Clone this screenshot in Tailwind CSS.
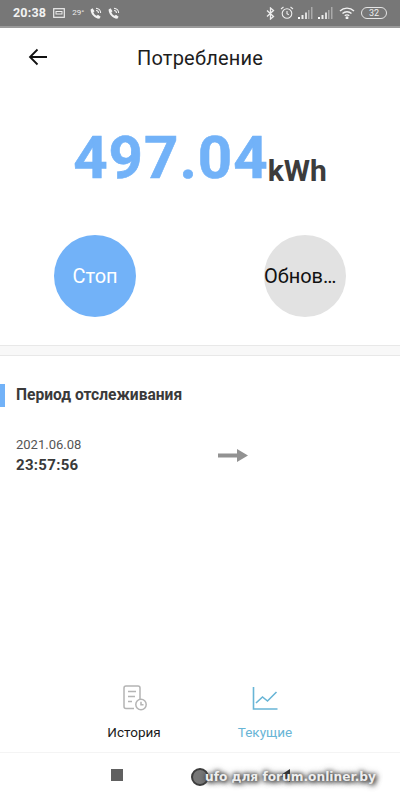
<!DOCTYPE html>
<html><head><meta charset="utf-8"><script src="https://cdn.jsdelivr.net/npm/@tailwindcss/browser@4"></script></head>
<body class="bg-white">
<div class="relative w-[400px] h-[800px] overflow-hidden bg-white font-['Roboto',sans-serif] flex flex-col">
  <div class="h-[28px] shrink-0 bg-[#777777] border-b-2 border-[#9a9a9a] flex items-center justify-between pl-[13px] pr-[13px] text-white">
    <div class="flex items-center">
      <span class="text-[12.5px] font-bold text-[#f2f2f2] tracking-[0.2px]">20:38</span>
      <svg class="ml-[7px]" width="12" height="10" viewBox="0 0 12 10" fill="none" stroke="#eee"><rect x=".7" y=".7" width="10.6" height="8.6" stroke-width="1.2"/><rect x="3" y="3.5" width="6" height="2.5" stroke-width="1"/></svg>
      <span class="ml-[7px] text-[8px] text-[#eee]">29°</span>
      <svg class="ml-[5px]" width="13" height="13" viewBox="0 0 24 24" fill="#f2f2f2"><path d="M6.600 2.500 3 4.500C2.500 12 10 21 19 21.500l2.500-3.500-5-3.500-2.300 1.800C11.500 15.500 8.800 12.500 8 9.800l2.200-2z"/><path d="M13 2.500a8.500 8.500 0 0 1 8.500 8.500" stroke="#f2f2f2" stroke-width="2" fill="none"/><path d="M13 6.500a4.500 4.500 0 0 1 4.500 4.500" stroke="#f2f2f2" stroke-width="2" fill="none"/></svg>
      <svg class="ml-[5px]" width="13" height="13" viewBox="0 0 24 24" fill="#f2f2f2"><path d="M6.600 2.500 3 4.500C2.500 12 10 21 19 21.500l2.500-3.500-5-3.500-2.300 1.800C11.500 15.500 8.800 12.500 8 9.800l2.200-2z"/><path d="M13 2.500a8.500 8.500 0 0 1 8.500 8.500" stroke="#f2f2f2" stroke-width="2" fill="none"/><path d="M13 6.500a4.500 4.500 0 0 1 4.500 4.500" stroke="#f2f2f2" stroke-width="2" fill="none"/></svg>
    </div>
    <div class="flex items-center">
      <svg width="9" height="13" viewBox="0 0 9 13" fill="none" stroke="#eee" stroke-width="1.300"><path d="M1 3.500l6.500 6-3 2.500V1l3 2.500L1 9.500"/></svg>
      <svg class="ml-[5px]" width="14" height="14" viewBox="0 0 14 14" fill="none" stroke="#eee" stroke-width="1.100"><circle cx="7" cy="7.500" r="4.800"/><path d="M7 5v2.800l1.800 1M1 3l2.500-2M13 3l-2.500-2"/></svg>
      <svg class="ml-[4px]" width="15" height="12" viewBox="0 0 15 12"><rect x="0" y="10" width="2" height="2" fill="#fff"/><rect x="3.500" y="8" width="2" height="4" fill="#eee"/><rect x="7" y="5.500" width="2" height="6.500" fill="#ddd"/><rect x="10" y="3" width="1.500" height="9" fill="#aaa"/><rect x="13" y="0" width="1.500" height="12" fill="#aaa"/></svg>
      <svg class="ml-[5px]" width="15" height="12" viewBox="0 0 15 12"><rect x="0" y="10" width="2" height="2" fill="#fff"/><rect x="3.500" y="8" width="2" height="4" fill="#eee"/><rect x="7" y="5.500" width="2" height="6.500" fill="#ddd"/><rect x="10" y="3" width="1.500" height="9" fill="#aaa"/><rect x="13" y="0" width="1.500" height="12" fill="#aaa"/></svg>
      <svg class="ml-[6px]" width="16" height="12" viewBox="0 0 16 12" fill="none" stroke="#f2f2f2" stroke-width="1.400"><path d="M1 4a10 10 0 0 1 14 0M3.500 6.500a6.500 6.500 0 0 1 9 0M5.800 8.800a3 3 0 0 1 4.400 0"/><circle cx="8" cy="10.800" r=".8" fill="#f2f2f2"/></svg>
      <div class="ml-[6px] w-[26px] h-[12px] rounded-full border border-[#e5e5e5] flex items-center justify-center text-[9px] leading-none text-[#eee]">32</div>
    </div>
  </div>

  <div class="h-[60px] shrink-0 relative flex items-center justify-center">
    <svg class="absolute left-[28px] top-[20px]" width="20" height="18" viewBox="0 0 20 18" fill="none" stroke="#111" stroke-width="1.800"><path d="M19 9H2M9.500 1.500 2 9l7.500 7.500"/></svg>
    <h1 class="text-[20px] text-[#1d1d1d] tracking-[0.2px]">Потребление</h1>
  </div>

  <div class="mt-[34px] h-[72px] flex items-end justify-center">
    <span class="text-[60px] leading-[72px] font-bold text-[#72b2f8] tracking-[1px] [-webkit-text-stroke:0.6px_#72b2f8]">497.04</span>
    <span class="text-[30px] leading-[40px] mb-[3px] font-bold text-[#3c3c3c] -ml-[1px]">kWh</span>
  </div>

  <div class="mt-[41px] flex justify-between pl-[54px] pr-[54px]">
    <div class="w-[82px] h-[82px] rounded-full bg-[#72b2f8] text-white text-[20px] flex items-center justify-center">Стоп</div>
    <div class="w-[82px] h-[82px] rounded-full bg-[#e2e2e2] text-[#111] text-[20px] flex items-center justify-start whitespace-nowrap">Обнов…</div>
  </div>

  <div class="mt-[28px] h-[11px] shrink-0 bg-[#f8f8f8] border-y border-[#e8e8e8]"></div>

  <div class="mt-[28px] h-[23px] flex items-center">
    <div class="w-[5px] h-[23px] bg-[#72b2f8]"></div>
    <h2 class="ml-[11px] text-[15.6px] font-bold text-[#3a3a3a]">Период отслеживания</h2>
  </div>

  <div class="mt-[29px] pl-[16px] flex items-start">
    <div class="w-[202px]">
      <div class="text-[13px] leading-[18px] text-[#555555]">2021.06.08</div>
      <div class="mt-[1px] text-[15px] leading-[21px] font-bold text-[#3a3a3a] tracking-[0.3px]">23:57:56</div>
    </div>
    <svg class="mt-[13px]" width="30" height="13" viewBox="0 0 30 13"><rect x="0" y="4.500" width="20" height="4" fill="#929292"/><path d="M19 0l11 6.500L19 13z" fill="#929292"/></svg>
  </div>

  <div class="mt-auto h-[85px] pl-[70px] grid grid-cols-[130px_130px] border-b border-[#f4f4f4]">
    <div class="flex flex-col items-center">
      <svg class="mt-[17px]" width="26" height="26" viewBox="0 0 26 26" fill="none" stroke="#b4b4b4" stroke-width="1.500"><path d="M12 23.500H4a2 2 0 0 1-2-2V3a2 2 0 0 1 2-2h12a2 2 0 0 1 2 2v11"/><path d="M6 6.500h8M6 11.500h7M6 16.500h4"/><circle cx="19" cy="19.500" r="5.200"/><path d="M19 16.800v3h2.500"/></svg>
      <span class="mt-[12px] -ml-[2px] text-[13.500px] leading-[18px] text-[#1a1a1a]">История</span>
    </div>
    <div class="flex flex-col items-center">
      <svg class="mt-[17px]" width="26" height="26" viewBox="0 0 26 26" fill="none" stroke="#68b5d6" stroke-width="1.600"><path d="M1.500 2v22h24"/><path d="M4 18l6.500-6 5 4 9-9"/></svg>
      <span class="mt-[12px] text-[13.500px] leading-[18px] text-[#68b5d6]">Текущие</span>
    </div>
  </div>

  <div class="h-[47px] shrink-0 relative">
    <div class="absolute left-[111px] top-[16px] w-[12px] h-[12px] bg-[#606060]"></div>
    <div class="absolute left-[191px] top-[15px] w-[18px] h-[18px] rounded-full border-2 border-[#3d3d3d] bg-[#777777]"></div>
    <svg class="absolute left-[280px] top-[16px]" width="10" height="13" viewBox="0 0 10 13"><path d="M10 0v13L0 6.500z" fill="#333"/></svg>
    <div class="absolute left-[205px] top-[15px] font-['DejaVu_Sans',sans-serif] text-[12.2px] leading-[18px] font-bold text-[#eeeeee] whitespace-nowrap [text-shadow:0_0_4px_#333,0_0_7px_#555,2px_2px_5px_#555]">ufo для forum.onliner.by</div>
  </div>
</div>
</body></html>
